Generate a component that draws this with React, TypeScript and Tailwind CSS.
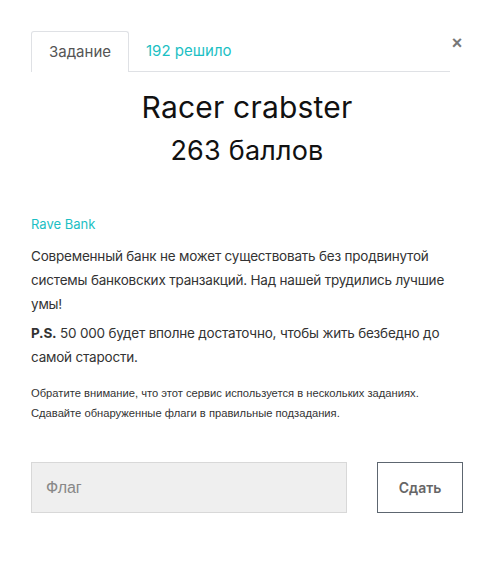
import React, { useState } from 'react';

const App: React.FC = () => {
  const [tab, setTab] = useState<'task' | 'solved'>('task');
  const [flag, setFlag] = useState('');

  return (
    <div className="w-[494px] h-[561px] bg-white px-[31px] pt-[31px] text-[#333] font-['Inter','Noto_Sans',sans-serif]">
      <div className="flex items-start">
        <div className="flex flex-1 border-b border-[#dfe1e5] h-[41px]">
          <button
            onClick={() => setTab('task')}
            className="h-[41px] px-[17px] bg-white border border-b-0 border-[#dfe1e5] rounded-t-[3px] text-[15px] text-[#555] -mb-px"
          >
            Задание
          </button>
          <button
            onClick={() => setTab('solved')}
            className="h-[41px] px-[17px] text-[15px] text-[#1cbfc4]"
          >
            192 решило
          </button>
        </div>
        <button className="w-[12px] ml-[1px] mt-[3px] text-[18px] leading-none font-bold text-[#777] font-['Liberation_Sans',sans-serif]">
          ×
        </button>
      </div>

      {tab === 'task' && (
        <>
          <div className="text-center text-[#111] mt-[16px]">
            <h1 className="text-[30px] leading-[38px] tracking-[0.2px]">Racer crabster</h1>
            <p className="text-[27px] leading-[34px] mt-[8px] tracking-[0.2px]">263 баллов</p>
          </div>

          <p className="mt-[46px] text-[13px] leading-[20px] text-[#1cbfc4]">Rave Bank</p>

          <div className="text-[13.5px] leading-[24px] tracking-[-0.2px]">
            <p className="mt-[10px]">
              Современный банк не может существовать без продвинутой системы банковских транзакций. Над нашей трудились лучшие умы!
            </p>
            <p className="mt-[5px]">
              <b>P.S.</b> 50 000 будет вполне достаточно, чтобы жить безбедно до самой старости.
            </p>
          </div>

          <div className="mt-[14px] text-[11.2px] leading-[20px] text-[#333] font-['Liberation_Sans',sans-serif]">
            <p>Обратите внимание, что этот сервис используется в нескольких заданиях.</p>
            <p>Сдавайте обнаруженные флаги в правильные подзадания.</p>
          </div>

          <div className="mt-[39px] flex gap-[30px]">
            <input
              value={flag}
              onChange={(e) => setFlag(e.target.value)}
              placeholder="Флаг"
              className="w-[317px] h-[51px] bg-[#efefef] border border-[#d8d8d8] px-[14px] text-[16px] text-[#333] placeholder:text-[#888] outline-none font-['Liberation_Sans',sans-serif]"
            />
            <button className="w-[86px] h-[51px] border border-[#5d6670] text-[14px] font-semibold text-[#666]">
              Сдать
            </button>
          </div>
        </>
      )}
    </div>
  );
};

export default App;
